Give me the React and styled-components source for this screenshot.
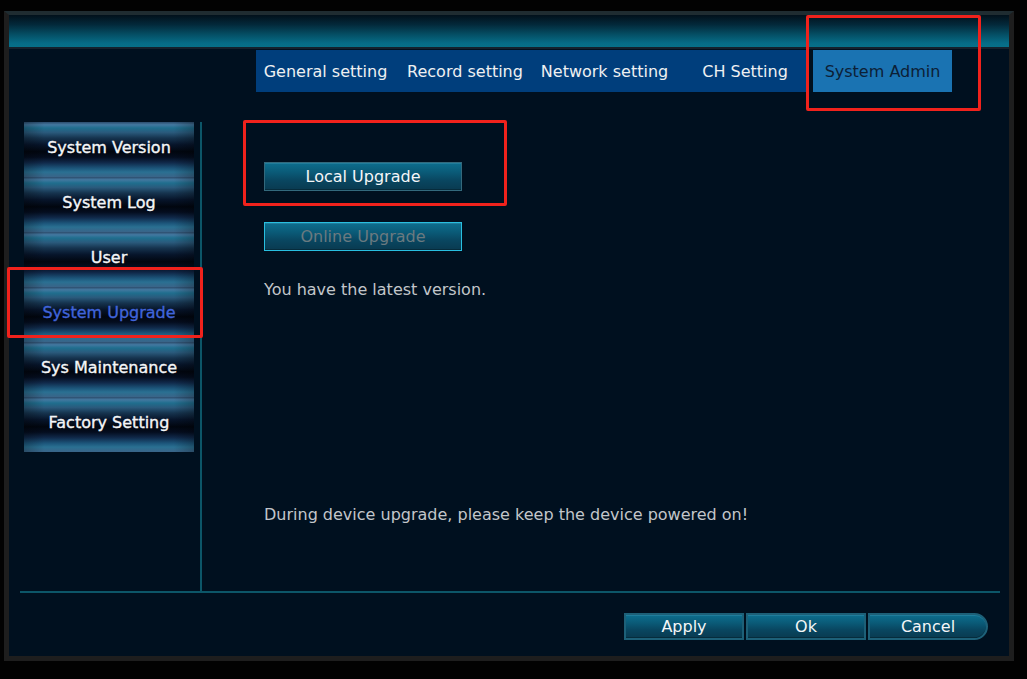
import React from "react";
import styled, { createGlobalStyle } from "styled-components";

const Global = createGlobalStyle`
  html, body { margin: 0; padding: 0; background: #020202; }
  body { font-family: "DejaVu Sans", Verdana, sans-serif; }
  #root { width: 1027px; height: 679px; position: relative; overflow: hidden; }
`;

const Screen = styled.div`
  position: relative;
  width: 1027px;
  height: 679px;
  padding: 11px 0 0 4px;
  box-sizing: border-box;
`;

const Window = styled.div`
  width: 1010px;
  height: 650px;
  box-sizing: border-box;
  border: 5px solid #1e1e1e;
  border-top: 4px solid #1f2c31;
  background: #00101f;
  display: flex;
  flex-direction: column;
`;

const Header = styled.div`
  height: 32px;
  flex: none;
  background: linear-gradient(180deg, #02111b 0%, #03293a 30%, #055066 62%, #066c87 88%, #077089 100%);
`;

const HeaderRule = styled.div`
  height: 2px;
  flex: none;
  background: #14222e;
`;

const TabRow = styled.div`
  display: flex;
  margin-top: 1px;
  padding-left: 247px;
  height: 42px;
  flex: none;
`;

const TabGroup = styled.div`
  display: flex;
  background: #003e7c;
`;

const Tab = styled.div`
  width: ${(p) => p.$w}px;
  padding-left: ${(p) => p.$pl || 0}px;
  box-sizing: border-box;
  height: 42px;
  display: flex;
  align-items: center;
  justify-content: center;
  font-size: 16px;
  white-space: nowrap;
  color: ${(p) => (p.$active ? "#0c2036" : "#eef0f2")};
  background: ${(p) => (p.$active ? "#1a73b2" : "transparent")};
  margin-left: ${(p) => p.$ml || 0}px;
`;

const Body = styled.div`
  display: flex;
  margin-top: 30px;
  padding-left: 15px;
  height: 469px;
  flex: none;
`;

const Sidebar = styled.div`
  width: 170px;
  display: flex;
  flex-direction: column;
  align-self: flex-start;
`;

const SideItem = styled.div`
  height: 55px;
  display: flex;
  align-items: center;
  justify-content: center;
  padding-bottom: 5px;
  box-sizing: border-box;
  font-size: 16px;
  white-space: nowrap;
  color: ${(p) => (p.$active ? "#4064da" : "#f4f6f8")};
  -webkit-text-stroke: 0.35px ${(p) => (p.$active ? "#4064da" : "#f4f6f8")};
  background:
    linear-gradient(90deg, rgba(0,0,0,0.25) 0%, rgba(0,0,0,0) 12%, rgba(0,0,0,0) 88%, rgba(0,0,0,0.25) 100%),
    linear-gradient(180deg, #2c4c6c 0%, #4378a0 5%, #1f6e8e 11%, #2a5a7c 19%, #16344f 29%, #07152b 41%, #01060f 54%, #040d1f 64%, #10294a 74%, #1c557a 84%, #2a7092 91%, #3a6488 100%);
`;

const VDivider = styled.div`
  width: 2px;
  margin-left: 6px;
  background: #0c5668;
  flex: none;
`;

const Content = styled.div`
  display: flex;
  flex-direction: column;
  align-items: flex-start;
  padding-left: 62px;
  flex: 1;
`;

const Button = styled.button`
  font-family: "DejaVu Sans", Verdana, sans-serif;
  font-size: 16px;
  width: ${(p) => p.$w || 198}px;
  height: ${(p) => p.$h || 29}px;
  margin: 0;
  margin-top: ${(p) => p.$mt || 0}px;
  padding: 0;
  box-sizing: border-box;
  color: ${(p) => (p.$disabled ? "#6a7a80" : "#f4f6f8")};
  border: 1px solid ${(p) => (p.$disabled ? "#28bfe0" : "#33697c")};
  border-radius: ${(p) => (p.$round ? "0 14px 14px 0" : "0")};
  background: linear-gradient(180deg, #0d6e8e 0%, #0a5a77 35%, #094660 65%, #093a50 100%);
  box-shadow: inset 0 1px 0 rgba(120, 200, 230, 0.18), inset 0 -1px 0 rgba(0, 0, 0, 0.25);
  display: flex;
  align-items: center;
  justify-content: center;
`;

const Note = styled.div`
  font-size: 16px;
  line-height: 20px;
  color: #c2c6ca;
  margin-top: ${(p) => p.$mt || 0}px;
  white-space: nowrap;
`;

const Spacer = styled.div`
  flex: 1;
`;

const HRule = styled.div`
  height: 2px;
  margin-left: 11px;
  width: 980px;
  background: #0c5668;
  flex: none;
`;

const Footer = styled.div`
  display: flex;
  justify-content: flex-end;
  gap: 2px;
  margin-top: 20px;
  padding-right: 21px;
`;

const FootButton = styled(Button)`
  border: 2px solid #1d6078;
`;

const Callout = styled.div`
  position: absolute;
  left: ${(p) => p.$x}px;
  top: ${(p) => p.$y}px;
  width: ${(p) => p.$w}px;
  height: ${(p) => p.$h}px;
  box-sizing: border-box;
  border: 3px solid #f0221c;
  border-radius: 2px;
  pointer-events: none;
`;

const tabs = [
  { label: "General setting", w: 139 },
  { label: "Record setting", w: 140 },
  { label: "Network setting", w: 139 },
  { label: "CH Setting", w: 132, pl: 10 },
];

const sideItems = [
  "System Version",
  "System Log",
  "User",
  "System Upgrade",
  "Sys Maintenance",
  "Factory Setting",
];

export default function App() {
  return (
    <>
      <Global />
      <Screen>
        <Window>
          <Header />
          <HeaderRule />
          <TabRow>
            <TabGroup>
              {tabs.map((t) => (
                <Tab key={t.label} $w={t.w} $pl={t.pl}>
                  {t.label}
                </Tab>
              ))}
            </TabGroup>
            <Tab $w={139} $ml={7} $active>
              System Admin
            </Tab>
          </TabRow>
          <Body>
            <Sidebar>
              {sideItems.map((s) => (
                <SideItem key={s} $active={s === "System Upgrade"}>
                  {s}
                </SideItem>
              ))}
            </Sidebar>
            <VDivider />
            <Content>
              <Button $mt={40}>Local Upgrade</Button>
              <Button $mt={31} $disabled>
                Online Upgrade
              </Button>
              <Note $mt={29}>You have the latest version.</Note>
              <Spacer />
              <Note>During device upgrade, please keep the device powered on!</Note>
              <Spacer style={{ flex: "none", height: 66 }} />
            </Content>
          </Body>
          <HRule />
          <Footer>
            <FootButton $w={120} $h={27}>Apply</FootButton>
            <FootButton $w={120} $h={27}>Ok</FootButton>
            <FootButton $w={120} $h={27} $round>
              Cancel
            </FootButton>
          </Footer>
        </Window>
        <Callout $x={806} $y={15} $w={175} $h={96} />
        <Callout $x={243} $y={120} $w={264} $h={86} />
        <Callout $x={7} $y={267} $w={196} $h={71} />
      </Screen>
    </>
  );
}
